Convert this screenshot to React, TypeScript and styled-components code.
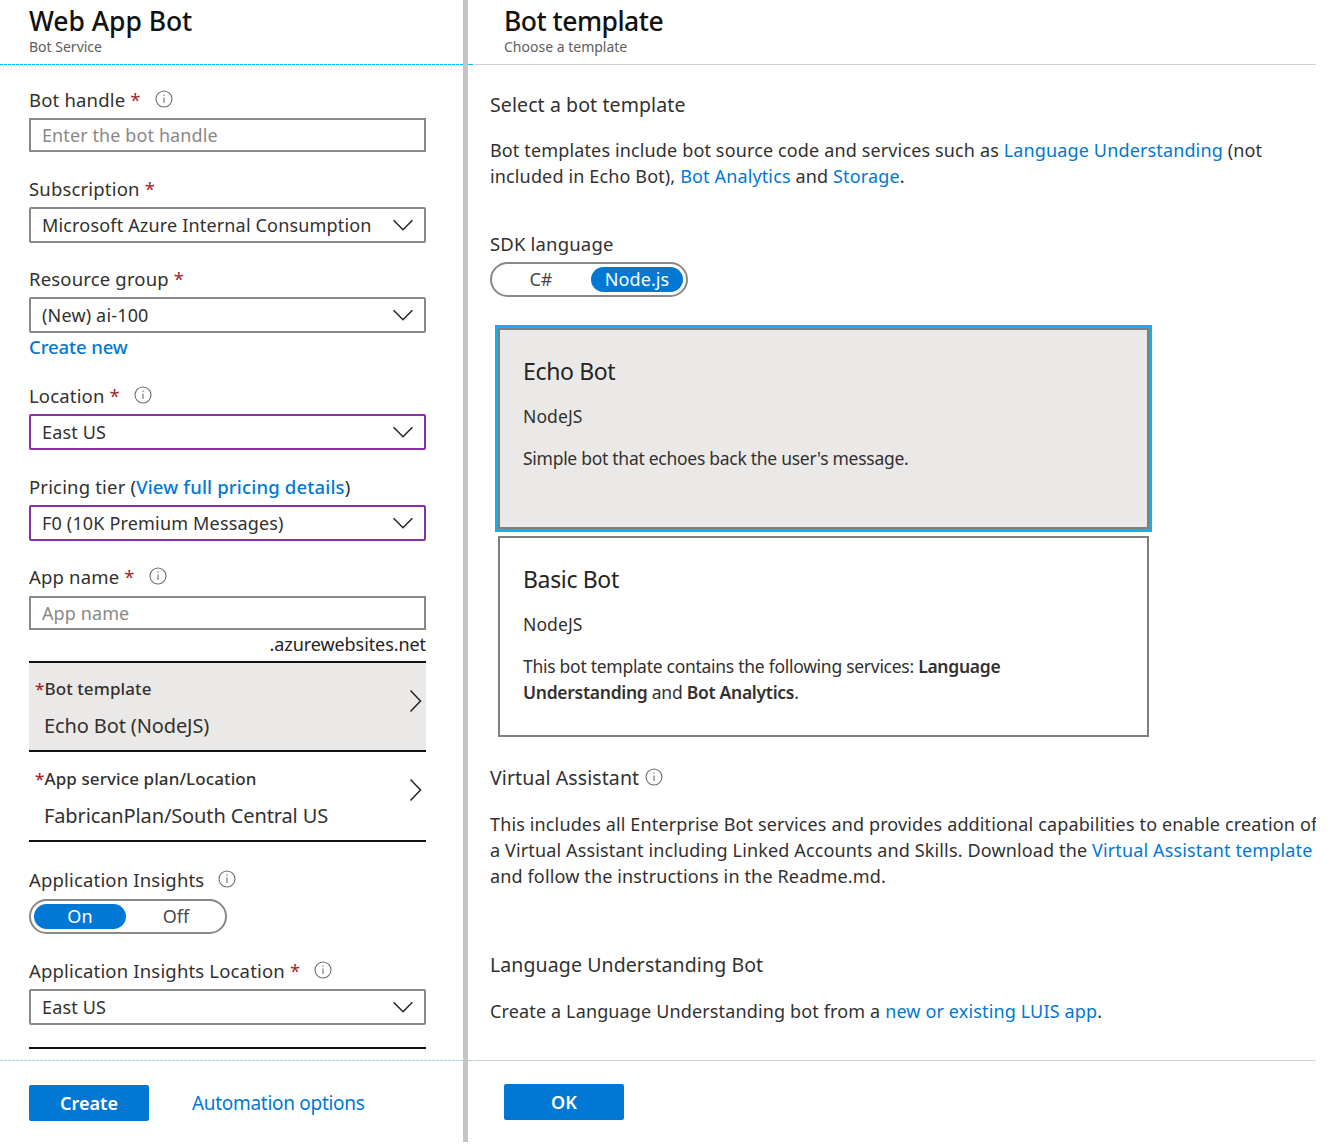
import React from "react";
import styled, { createGlobalStyle } from "styled-components";

const Global = createGlobalStyle`
  html, body { margin: 0; padding: 0; background: #fff; }
  body { font-family: "Noto Sans", "Open Sans", "Liberation Sans", sans-serif; color: #252423; }
  * { box-sizing: border-box; }
`;

const Page = styled.div`
  display: flex;
  width: 1316px;
  height: 1142px;
  overflow: hidden;
`;
const LeftPanel = styled.section`
  width: 463px;
  flex: none;
  display: flex;
  flex-direction: column;
`;
const Divider = styled.div`
  width: 5px;
  flex: none;
  background: #c4c4c4;
`;
const RightPanel = styled.section`
  width: 848px;
  flex: none;
  display: flex;
  flex-direction: column;
`;
const Header = styled.header<{ $left: number }>`
  height: 64px;
  padding-left: ${(p) => p.$left}px;
  flex: none;
`;
const Title = styled.h1<{ $tight?: boolean }>`
  margin: 0;
  padding-top: 4px;
  font-size: 26.5px;
  line-height: 34px;
  font-weight: 500;
  color: #111;
  letter-spacing: ${(p) => (p.$tight ? "-0.5px" : "-0.05px")};
`;
const Subtitle = styled.div`
  font-size: 14px;
  line-height: 18px;
  color: #605e5c;
`;
const DashedRule = styled.div<{ $pale?: boolean }>`
  height: 1px;
  flex: none;
  background: repeating-linear-gradient(
    to right,
    ${(p) => (p.$pale ? "#a9d5df" : "#00bcf2")} 0 3px,
    transparent 3px 4px
  );
`;
const SolidRule = styled.div<{ $stub: string }>`
  height: 1px;
  flex: none;
  background: linear-gradient(to right, ${(p) => p.$stub} 0 5px, #fff 5px 6px, #d2d2d2 6px);
`;
const Form = styled.div`
  flex: 1;
  padding: 0 37px 0 29px;
  display: flex;
  flex-direction: column;
`;
const Label = styled.label<{ $top: number; $bottom?: number }>`
  display: flex;
  align-items: center;
  height: 24px;
  padding-bottom: 2px;
  margin-top: ${(p) => p.$top}px;
  margin-bottom: ${(p) => p.$bottom ?? 6}px;
  font-size: 18.5px;
  letter-spacing: 0.17px;
  color: #323130;
  white-space: nowrap;
`;
const Req = styled.span`
  color: #a4262c;
  margin-left: 5px;
`;
const InfoWrap = styled.span<{ $gap: number }>`
  display: inline-flex;
  margin-left: ${(p) => p.$gap}px;
`;
const InputBox = styled.div`
  height: 34px;
  border: 2px solid #8a8886;
  padding-left: 11px;
  display: flex;
  align-items: center;
  font-size: 18px;
  letter-spacing: 0.1px;
  color: #8a8886;
  white-space: nowrap;
`;
const SelectBox = styled.div<{ $accent?: boolean }>`
  height: 36px;
  border: 2px solid ${(p) => (p.$accent ? "#8a2da8" : "#8a8886")};
  border-radius: 2px;
  padding: 0 11px;
  display: flex;
  align-items: center;
  justify-content: space-between;
  font-size: 18px;
  letter-spacing: 0.17px;
  color: #323130;
  white-space: nowrap;
`;
const CreateLink = styled.a`
  display: block;
  height: 20px;
  margin-top: 4px;
  line-height: 20px;
  font-size: 18.5px;
  font-weight: 500;
  letter-spacing: -0.1px;
  color: #0078d4;
`;
const Suffix = styled.div`
  text-align: right;
  height: 20px;
  margin-top: 4px;
  line-height: 20px;
  font-size: 18px;
  letter-spacing: -0.08px;
  color: #252423;
`;
const Link = styled.a<{ $medium?: boolean }>`
  color: #0078d4;
  font-weight: ${(p) => (p.$medium ? 500 : 400)};
`;
const NavRow = styled.div<{ $active?: boolean; $top?: number; $first?: boolean }>`
  position: relative;
  height: ${(p) => (p.$first ? 91 : 90)}px;
  margin-top: ${(p) => p.$top ?? 0}px;
  border-top: ${(p) => (p.$first ? "2px solid #111" : "none")};
  border-bottom: 2px solid #111;
  background: ${(p) => (p.$active ? "#ebe9e7" : "#fff")};
  padding: ${(p) => (p.$first ? "15px" : "16px")} 0 0 6px;
  display: flex;
  flex-direction: column;
`;
const NavLabel = styled.div`
  font-size: 17px;
  line-height: 22px;
  font-weight: 500;
  letter-spacing: 0.1px;
  color: #323130;
  white-space: nowrap;
`;
const NavStar = styled.span`
  color: #a4262c;
`;
const NavValue = styled.div`
  margin-top: 14px;
  padding-left: 9px;
  font-size: 20px;
  line-height: 24px;
  letter-spacing: -0.12px;
  color: #323130;
  white-space: nowrap;
`;
const NavChevron = styled.svg`
  position: absolute;
  right: 4px;
  top: 26px;
`;
const Toggle = styled.div<{ $w: number }>`
  width: ${(p) => p.$w}px;
  height: 35px;
  border: 2px solid #8a8886;
  border-radius: 18px;
  padding: 3px;
  display: flex;
  align-items: center;
`;
const ToggleOption = styled.div<{ $on?: boolean; $w: number; $indent?: number }>`
  flex: none;
  width: ${(p) => p.$w}px;
  height: 25px;
  line-height: 25px;
  border-radius: 13px;
  text-align: center;
  text-indent: ${(p) => p.$indent ?? 0}px;
  font-size: 18px;
  letter-spacing: 0.1px;
  background: ${(p) => (p.$on ? "#0078d4" : "transparent")};
  color: ${(p) => (p.$on ? "#fff" : "#4a4846")};
`;
const BottomLine = styled.div`
  height: 2px;
  margin-top: 22px;
  background: #111;
`;
const Footer = styled.footer`
  flex: none;
  height: 81px;
  padding: 24px 0 0 29px;
  display: flex;
  align-items: flex-start;
  gap: 43px;
`;
const RightFooter = styled(Footer)`
  padding: 23px 0 0 36px;
`;
const PrimaryButton = styled.button`
  width: 120px;
  height: 36px;
  border: none;
  border-radius: 2px;
  background: #0078d4;
  color: #fff;
  font: 600 18px "Noto Sans", sans-serif;
`;
const FooterLink = styled.a`
  font-size: 19px;
  line-height: 36px;
  letter-spacing: -0.3px;
  color: #0078d4;
`;
const Content = styled.div`
  flex: 1;
  padding: 0 0 0 22px;
  white-space: nowrap;
  overflow: hidden;
`;
const Heading = styled.h2<{ $top: number }>`
  margin: ${(p) => p.$top}px 0 0;
  display: flex;
  align-items: center;
  height: 28px;
  font-size: 19.5px;
  font-weight: 400;
  letter-spacing: 0.1px;
  color: #323130;
`;
const Para = styled.p<{ $top: number }>`
  margin: ${(p) => p.$top}px 0 0;
  font-size: 18px;
  line-height: 26px;
  letter-spacing: 0.14px;
  color: #323130;
`;
const SdkLabel = styled.div`
  margin-top: 43px;
  height: 24px;
  line-height: 24px;
  font-size: 18.5px;
  letter-spacing: 0.17px;
  color: #323130;
  margin-bottom: 6px;
`;
const Cards = styled.div`
  margin: 31px 0 0 8px;
  display: flex;
  flex-direction: column;
  gap: 7px;
  width: 651px;
`;
const Card = styled.article<{ $selected?: boolean }>`
  height: 201px;
  border: 2px solid #7f7f7f;
  background: ${(p) => (p.$selected ? "#ebe9e7" : "#fff")};
  outline: ${(p) => (p.$selected ? "3px solid #00b7f0" : "none")};
  padding: 26px 0 0 23px;
`;
const CardTitle = styled.h3`
  margin: 0;
  font-size: 23px;
  line-height: 30px;
  font-weight: 400;
  letter-spacing: -0.35px;
  color: #252423;
`;
const CardMeta = styled.div`
  margin-top: 18px;
  font-size: 17.5px;
  line-height: 24px;
  letter-spacing: 0.1px;
  color: #323130;
`;
const CardText = styled.div`
  margin-top: 17px;
  font-size: 17.5px;
  line-height: 26px;
  letter-spacing: -0.28px;
  color: #323130;
`;
const Strong = styled.b`
  font-weight: 600;
`;

const Info = ({ gap }: { gap: number }) => (
  <InfoWrap $gap={gap}>
    <svg width="18" height="18" viewBox="0 0 18 18" fill="none" stroke="#6f6d6b">
      <circle cx="9" cy="9" r="8" strokeWidth="1.1" />
      <path d="M9 7.5v5.5" strokeWidth="1.1" />
      <path d="M9 4.6v1.2" strokeWidth="1.2" />
    </svg>
  </InfoWrap>
);
const Chevron = () => (
  <svg width="20" height="12" viewBox="0 0 20 12" fill="none" stroke="#252423" strokeWidth="1.5">
    <path d="M.6 1.2 10 10.8 19.4 1.2" />
  </svg>
);
const Right = () => (
  <NavChevron width="13" height="24" viewBox="0 0 13 24" fill="none" stroke="#252423" strokeWidth="1.5">
    <path d="M1.5 1.5 11.5 12 1.5 22.5" />
  </NavChevron>
);

export default function App() {
  return (
    <Page>
      <Global />
      <LeftPanel>
        <Header $left={29}>
          <Title>Web App Bot</Title>
          <Subtitle>Bot Service</Subtitle>
        </Header>
        <DashedRule />
        <Form>
          <Label $top={23}>
            Bot handle<Req>*</Req>
            <Info gap={14} />
          </Label>
          <InputBox>Enter the bot handle</InputBox>

          <Label $top={25}>
            Subscription<Req>*</Req>
          </Label>
          <SelectBox>
            Microsoft Azure Internal Consumption
            <Chevron />
          </SelectBox>

          <Label $top={24}>
            Resource group<Req>*</Req>
          </Label>
          <SelectBox>
            (New) ai-100
            <Chevron />
          </SelectBox>
          <CreateLink>Create new</CreateLink>

          <Label $top={27}>
            Location<Req>*</Req>
            <Info gap={14} />
          </Label>
          <SelectBox $accent>
            East US
            <Chevron />
          </SelectBox>

          <Label $top={25}>
            Pricing tier (<Link $medium>View full pricing details</Link>)
          </Label>
          <SelectBox $accent>
            F0 (10K Premium Messages)
            <Chevron />
          </SelectBox>

          <Label $top={24} $bottom={7}>
            App name<Req>*</Req>
            <Info gap={14} />
          </Label>
          <InputBox>App name</InputBox>
          <Suffix>.azurewebsites.net</Suffix>

          <NavRow $active $first $top={7}>
            <NavLabel>
              <NavStar>*</NavStar>Bot template
            </NavLabel>
            <NavValue>Echo Bot (NodeJS)</NavValue>
            <Right />
          </NavRow>
          <NavRow>
            <NavLabel>
              <NavStar>*</NavStar>App service plan/Location
            </NavLabel>
            <NavValue>FabricanPlan/South Central US</NavValue>
            <Right />
          </NavRow>

          <Label $top={26} $bottom={7}>
            Application Insights
            <Info gap={14} />
          </Label>
          <Toggle $w={198}>
            <ToggleOption $on $w={92}>On</ToggleOption>
            <ToggleOption $w={96} $indent={4}>Off</ToggleOption>
          </Toggle>

          <Label $top={25}>
            Application Insights Location<Req>*</Req>
            <Info gap={14} />
          </Label>
          <SelectBox>
            East US
            <Chevron />
          </SelectBox>
          <BottomLine />
        </Form>
        <DashedRule $pale />
        <Footer>
          <PrimaryButton>Create</PrimaryButton>
          <FooterLink>Automation options</FooterLink>
        </Footer>
      </LeftPanel>
      <Divider />
      <RightPanel>
        <Header $left={36}>
          <Title $tight>Bot template</Title>
          <Subtitle>Choose a template</Subtitle>
        </Header>
        <SolidRule $stub="#00bcf2" />
        <Content>
          <Heading $top={25}>Select a bot template</Heading>
          <Para $top={19}>
            Bot templates include bot source code and services such as <Link>Language Understanding</Link> (not
            <br />
            included in Echo Bot), <Link>Bot Analytics</Link> and <Link>Storage</Link>.
          </Para>
          <SdkLabel>SDK language</SdkLabel>
          <Toggle $w={198}>
            <ToggleOption $w={96} $indent={-4}>C#</ToggleOption>
            <ToggleOption $on $w={92}>Node.js</ToggleOption>
          </Toggle>
          <Cards>
            <Card $selected>
              <CardTitle>Echo Bot</CardTitle>
              <CardMeta>NodeJS</CardMeta>
              <CardText>Simple bot that echoes back the user's message.</CardText>
            </Card>
            <Card>
              <CardTitle>Basic Bot</CardTitle>
              <CardMeta>NodeJS</CardMeta>
              <CardText>
                This bot template contains the following services: <Strong>Language</Strong>
                <br />
                <Strong>Understanding</Strong> and <Strong>Bot Analytics</Strong>.
              </CardText>
            </Card>
          </Cards>
          <Heading $top={26}>
            Virtual Assistant
            <Info gap={6} />
          </Heading>
          <Para $top={20}>
            This includes all Enterprise Bot services and provides additional capabilities to enable creation of
            <br />a Virtual Assistant including Linked Accounts and Skills. Download the{" "}
            <Link>Virtual Assistant template</Link>
            <br />
            and follow the instructions in the Readme.md.
          </Para>
          <Heading $top={61}>Language Understanding Bot</Heading>
          <Para $top={20}>
            Create a Language Understanding bot from a <Link>new or existing LUIS app</Link>.
          </Para>
        </Content>
        <SolidRule $stub="#a9d5df" />
        <RightFooter>
          <PrimaryButton>OK</PrimaryButton>
        </RightFooter>
      </RightPanel>
    </Page>
  );
}
